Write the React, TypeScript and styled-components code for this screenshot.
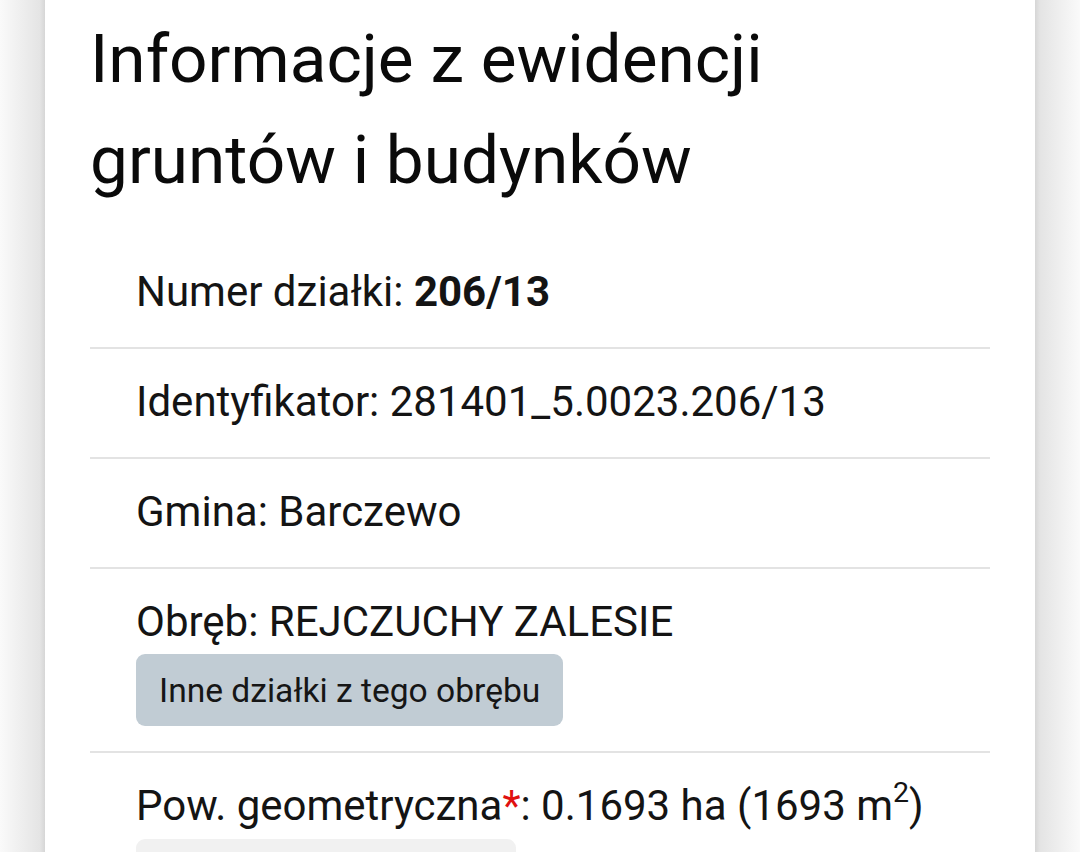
import React from 'react'
import styled, { createGlobalStyle } from 'styled-components'

const GlobalStyle = createGlobalStyle`
  html, body {
    margin: 0;
    padding: 0;
    background: #fafafa;
    overflow: hidden;
  }
  body {
    font-family: Roboto, 'Liberation Sans', sans-serif;
    color: #141414;
  }
`

const Page = styled.div`
  width: 1080px;
  height: 852px;
  overflow: hidden;
  display: flex;
  justify-content: center;
  background: linear-gradient(
    to right,
    #fafafa 0px,
    #e4e4e4 40px,
    #d6d6d6 45px,
    #fafafa 45px,
    #fafafa 1035px,
    #d6d6d6 1035px,
    #e4e4e4 1040px,
    #fafafa 1080px
  );
`

const Card = styled.section`
  width: 990px;
  box-sizing: border-box;
  background: #fff;
  padding: 8px 45px 0;
`

const Title = styled.h1`
  margin: 0 0 29px;
  font-family: Roboto, 'Noto Sans', sans-serif;
  font-weight: 400;
  font-size: 67.5px;
  line-height: 101px;
  color: #0a0a0a;
`

const List = styled.ul`
  list-style: none;
  margin: 0;
  padding: 0;
`

const Row = styled.li<{ $last?: boolean }>`
  padding: 25px 0 ${(p) => (p.$last ? 0 : 27)}px 46px;
  border-bottom: ${(p) => (p.$last ? 'none' : '2px solid #e3e3e3')};
  font-size: 42px;
  line-height: 56px;
`

const RowWithAction = styled(Row)`
  padding-bottom: 25px;
`

const Strong = styled.b`
  font-weight: 700;
`

const Star = styled.span`
  color: #e01010;
`

const Sup = styled.sup`
  font-size: 0.68em;
  line-height: 0;
  vertical-align: 0.62em;
`

const Action = styled.button<{ $tone?: 'slate' | 'light' }>`
  display: block;
  margin: ${(p) => (p.$tone === 'light' ? 5 : 4)}px 0 0;
  height: 72px;
  min-width: ${(p) => (p.$tone === 'light' ? '380px' : '0')};
  padding: 0 23px;
  border: none;
  border-radius: 9px;
  background: ${(p) => (p.$tone === 'light' ? '#f1f1f1' : '#c1ccd4')};
  font-family: Roboto, 'Liberation Sans', sans-serif;
  font-size: 33.6px;
  color: #161616;
  cursor: pointer;
`

export default function App() {
  return (
    <>
      <GlobalStyle />
      <Page>
        <Card>
          <Title>
            Informacje z ewidencji
            <br />
            gruntów i budynków
          </Title>
          <List>
            <Row>
              Numer działki: <Strong>206/13</Strong>
            </Row>
            <Row>Identyfikator: 281401_5.0023.206/13</Row>
            <Row>Gmina: Barczewo</Row>
            <RowWithAction>
              Obręb: REJCZUCHY ZALESIE
              <Action>Inne działki z tego obrębu</Action>
            </RowWithAction>
            <Row $last>
              Pow. geometryczna<Star>*</Star>: 0.1693 ha (1693 m<Sup>2</Sup>)
              <Action $tone="light" />
            </Row>
          </List>
        </Card>
      </Page>
    </>
  )
}
